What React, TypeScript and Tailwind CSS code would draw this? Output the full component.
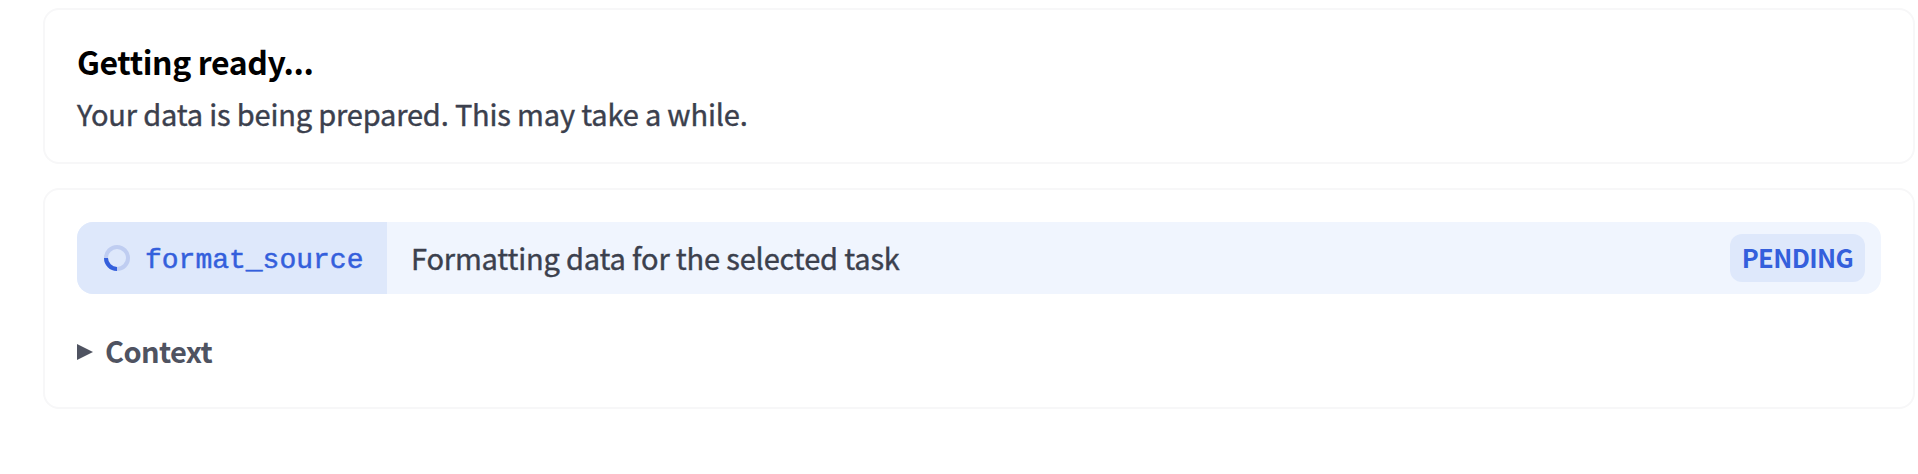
import React from "react";

function Spinner() {
  return (
    <svg className="size-[26px] shrink-0" viewBox="0 0 26 26" fill="none" strokeWidth="4">
      <circle cx="13" cy="13" r="11" stroke="#bfcdf1" />
      <path d="M13 24A11 11 0 0 1 2 13" stroke="#345fdc" />
    </svg>
  );
}

function Card({ className, children }: { className: string; children: React.ReactNode }) {
  return (
    <section className={`rounded-2xl border-2 border-[#f7f7f8] bg-white px-8 ${className}`}>
      {children}
    </section>
  );
}

export default function App() {
  return (
    <main className="flex h-[474px] flex-col gap-[24px] bg-white pt-2 pr-[3px] pl-[43px] font-['Noto_Sans_CJK_SC','Noto_Sans',sans-serif] text-[29px] tracking-[-0.17px] whitespace-nowrap text-[#3b404d]">
      <Card className="flex h-[156px] shrink-0 flex-col pt-[25px]">
        <h1 className="h-[52px] text-[32px] leading-[52px] font-bold tracking-[-0.4px] text-black">Getting ready...</h1>
        <p className="h-[52px] leading-[52px] [-webkit-text-stroke:0.4px]">Your data is being prepared. This may take a while.</p>
      </Card>
      <Card className="flex h-[221px] shrink-0 flex-col pt-[32px]">
        <div className="flex h-[72px] items-center overflow-hidden rounded-2xl bg-[#f0f5fe] pr-4">
          <div className="flex h-full w-[310px] items-center bg-[#dee8fb] pl-[27px] text-[#345fdc]">
            <Spinner />
            <code className="ml-[15px] pt-1.5 font-['Liberation_Mono',monospace] text-[28px] leading-10 tracking-normal [-webkit-text-stroke:0.5px]">
              format_source
            </code>
          </div>
          <span className="flex-1 pb-0.5 pl-6 leading-[48px] [-webkit-text-stroke:0.4px]">Formatting data for the selected task</span>
          <span className="flex h-12 w-[135px] items-center justify-center rounded-xl bg-[#dee8fb] pb-0.5 text-[25.5px] font-bold tracking-[-0.6px] text-[#345fdc]">
            PENDING
          </span>
        </div>
        <div className="mt-[33px] flex h-12 items-center gap-3 font-bold text-[#4f5361]">
          <svg className="mt-0.5 h-4 w-4" viewBox="0 0 16 16" fill="currentColor">
            <path d="M0 0L16 8L0 16Z" />
          </svg>
          <span className="pb-0.5 leading-[48px] tracking-[-0.6px]">Context</span>
        </div>
      </Card>
    </main>
  );
}
